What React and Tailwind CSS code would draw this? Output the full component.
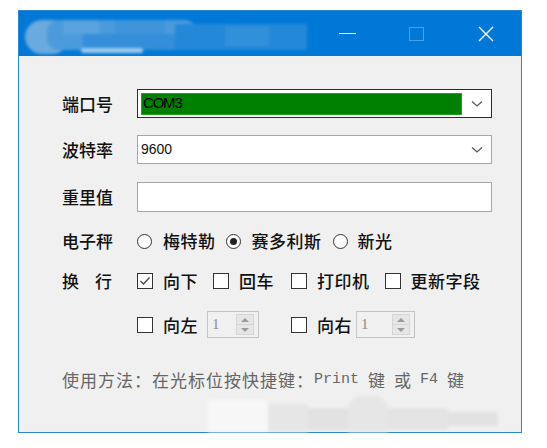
import React from 'react';

// ─── Small widgets ───────────────────────────────────────────────────────────

const CJK = { fontFamily: '"Noto Sans CJK SC", "Noto Sans", sans-serif' };
const MONO = { fontFamily: '"Liberation Mono", monospace' };

const Chevron = () => (
  <svg width="12" height="8" viewBox="0 0 12 8" className="shrink-0">
    <path d="M1 1.5 L6 6 L11 1.5" fill="none" stroke="#555" strokeWidth="1.2" />
  </svg>
);

const Radio = ({ checked }) => (
  <span className="w-[15px] h-[15px] rounded-full border border-[#333] bg-white flex items-center justify-center shrink-0">
    {checked && <span className="w-[7px] h-[7px] rounded-full bg-[#222]" />}
  </span>
);

const Check = ({ checked }) => (
  <span className="w-[16px] h-[16px] border border-[#333] bg-white flex items-center justify-center shrink-0">
    {checked && (
      <svg width="12" height="10" viewBox="0 0 12 10">
        <path d="M1.5 5 L4.5 8 L10.5 1.5" fill="none" stroke="#444" strokeWidth="1.3" />
      </svg>
    )}
  </span>
);

const Spin = ({ w }) => (
  <div className={`h-[27px] border border-[#c4c4c4] bg-[#f0f0f0] flex ${w}`}>
    <span className="flex-1 pl-[4px] pt-[3px] text-[15px] leading-[18px] font-normal text-[#8c8c8c]" style={{ fontFamily: '"Liberation Serif", serif' }}>
      1
    </span>
    <div className="w-[18px] my-[2px] mr-[4px] flex flex-col">
      <div className="flex-1 bg-[#e6e6e6] border border-[#d6d6d6] flex items-center justify-center">
        <span className="w-0 h-0 border-l-[4px] border-r-[4px] border-b-[4px] border-l-transparent border-r-transparent border-b-[#9a9a9a]" />
      </div>
      <div className="flex-1 bg-[#e6e6e6] border border-t-0 border-[#d6d6d6] flex items-center justify-center">
        <span className="w-0 h-0 border-l-[4px] border-r-[4px] border-t-[4px] border-l-transparent border-r-transparent border-t-[#9a9a9a]" />
      </div>
    </div>
  </div>
);

// ─── App ─────────────────────────────────────────────────────────────────────

export default function App() {
  return (
    <div className="w-[547px] h-[448px] bg-white pt-[10px] pl-[18px]" style={CJK}>
      <div className="w-[504px] h-[423px] border border-[#2a86d6] flex flex-col">
        {/* Title bar */}
        <div className="h-[45px] bg-[#0078d7] flex items-center shrink-0">
          {/* blurred title */}
          <div className="relative ml-[6px] w-[280px] h-[40px] mt-[4px] blur-[1.5px]">
            <div className="absolute left-0 top-[4px] w-[44px] h-[34px] rounded-full bg-[#6aaade]" />
            <div className="absolute left-[22px] top-[4px] w-[150px] h-[30px] rounded-[12px] bg-[#4b9bdc]" />
            <div className="absolute left-[38px] top-[4px] w-[36px] h-[14px] bg-[#5aa3de]" />
            <div className="absolute left-[90px] top-[4px] w-[50px] h-[14px] bg-[#3f94da]" />
            <div className="absolute left-[58px] top-[18px] w-[94px] h-[16px] bg-[#348ed9]" />
            <div className="absolute left-[150px] top-[8px] w-[132px] h-[26px] bg-[#2388d8]" />
            <div className="absolute left-[200px] top-[10px] w-[44px] h-[20px] bg-[#3190da]" />
            <div className="absolute left-[56px] top-[32px] w-[62px] h-[5px] rounded-full bg-[#9ccbee]" />
          </div>
          <div className="ml-auto flex items-center">
            <span className="w-[17px] h-[1.5px] bg-white mr-[53px]" />
            <span className="w-[15px] h-[14px] border border-white/30 mr-[54px]" />
            <svg width="16" height="16" viewBox="0 0 16 16" className="mr-[27px]">
              <path d="M1 1 L15 15 M15 1 L1 15" stroke="white" strokeWidth="1.4" />
            </svg>
          </div>
        </div>

        {/* Client */}
        <div className="flex-1 bg-[#f0f0f0] pl-[43px] pt-[33px] text-[17px] font-medium text-[#111] flex flex-col">
          <div className="flex items-center h-[29px]">
            <span className="w-[75px]">端口号</span>
            <div className="w-[355px] h-[29px] border border-[#2b2b2b] bg-white flex items-center pl-[3px] pr-[8px]">
              <div className="w-[321px] h-[22px] bg-[#008000] border border-[#22a022] flex items-center pl-[1px]">
                <span className="text-[15px] font-normal tracking-[-1.2px] text-black" style={{ fontFamily: '"Liberation Sans", sans-serif' }}>
                  COM3
                </span>
              </div>
              <span className="ml-auto"><Chevron /></span>
            </div>
          </div>

          <div className="flex items-center h-[29px] mt-[17px]">
            <span className="w-[75px]">波特率</span>
            <div className="w-[355px] h-[29px] border border-[#a5a5a5] bg-white flex items-center pl-[3px] pr-[8px]">
              <span className="text-[14px] font-normal" style={{ fontFamily: '"Liberation Sans", sans-serif' }}>9600</span>
              <span className="ml-auto"><Chevron /></span>
            </div>
          </div>

          <div className="flex items-center h-[30px] mt-[18px]">
            <span className="w-[75px]">重里值</span>
            <div className="w-[355px] h-[30px] border border-[#a5a5a5] bg-white" />
          </div>

          <div className="flex items-center h-[20px] mt-[19px]">
            <span className="w-[75px]">电子秤</span>
            <Radio />
            <span className="ml-[11px] tracking-[0.5px]">梅特勒</span>
            <span className="ml-[10px]"><Radio checked /></span>
            <span className="ml-[11px] tracking-[0.5px]">赛多利斯</span>
            <span className="ml-[11px]"><Radio /></span>
            <span className="ml-[10px] tracking-[0.5px]">新光</span>
          </div>

          <div className="flex items-center h-[20px] mt-[20px]">
            <span className="w-[33px]">换</span>
            <span className="w-[42px]">行</span>
            <Check checked />
            <span className="ml-[10px] tracking-[0.5px]">向下</span>
            <span className="ml-[15px]"><Check /></span>
            <span className="ml-[10px] tracking-[0.5px]">回车</span>
            <span className="ml-[17px]"><Check /></span>
            <span className="ml-[10px] tracking-[0.5px]">打印机</span>
            <span className="ml-[15px]"><Check /></span>
            <span className="ml-[10px] tracking-[0.5px]">更新字段</span>
          </div>

          <div className="flex items-center h-[27px] mt-[20px] pl-[75px]">
            <Check />
            <span className="ml-[10px] tracking-[0.5px]">向左</span>
            <span className="ml-[9px]"><Spin w="w-[52px]" /></span>
            <span className="ml-[32px]"><Check /></span>
            <span className="ml-[10px] tracking-[0.5px]">向右</span>
            <span className="ml-[4px]"><Spin w="w-[59px]" /></span>
          </div>

          <div className="h-[20px] mt-[32px] flex items-center text-[17px] font-normal text-[#666] whitespace-pre">
            <span className="tracking-[1px]">使用方法：在光标位按快捷键：</span>
            <span className="text-[15px]" style={MONO}>Print </span>
            <span>键</span>
            <span className="text-[15px]" style={MONO}> </span>
            <span>或</span>
            <span className="text-[15px]" style={MONO}> F4 </span>
            <span>键</span>
          </div>

          {/* blurred footer */}
          <div className="relative ml-[146px] mt-[4px] w-[290px] h-[38px] blur-[1.5px]">
            <div className="absolute left-0 top-[6px] w-[60px] h-[32px] bg-[#f7f7f7]" />
            <div className="absolute left-[60px] top-[10px] w-[40px] h-[28px] bg-[#e6e6e6]" />
            <div className="absolute left-[100px] top-[14px] w-[60px] h-[22px] bg-[#e2e2e2]" />
            <div className="absolute left-[140px] top-[2px] w-[40px] h-[36px] rounded-t-[14px] bg-[#e6e6e6]" />
            <div className="absolute left-[180px] top-[14px] w-[60px] h-[22px] bg-[#e4e4e4]" />
            <div className="absolute left-[240px] top-[18px] w-[50px] h-[14px] bg-[#e2e2e2]" />
          </div>
        </div>
      </div>
    </div>
  );
}
